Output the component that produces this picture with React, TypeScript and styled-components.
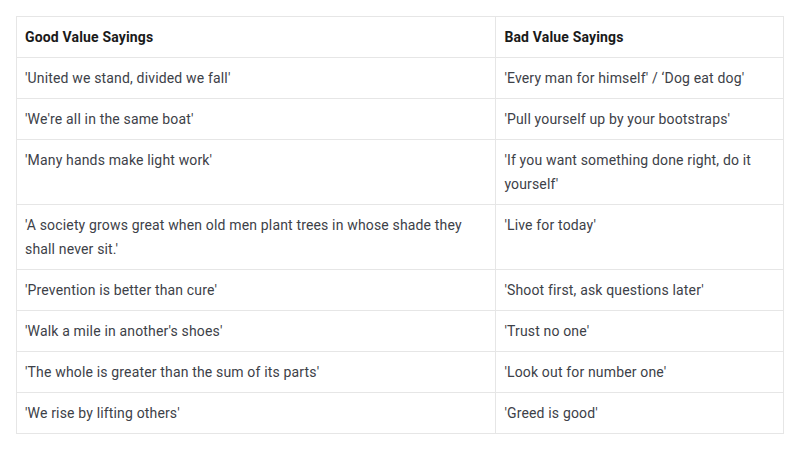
import React from "react";
import styled, { createGlobalStyle } from "styled-components";

const Global = createGlobalStyle`
  html, body { margin: 0; padding: 0; background: #ffffff; }
  body { font-family: "Roboto", "Liberation Sans", sans-serif; }
`;

const Page = styled.div`
  padding: 16px;
`;

const Table = styled.table`
  width: 768px;
  border-collapse: collapse;
  table-layout: fixed;
  font-size: 14px;
  line-height: 24px;
  letter-spacing: 0.16px;
  color: #3d4148;
`;

const HeadCell = styled.th<{ $w: string }>`
  width: ${(p) => p.$w};
  box-sizing: border-box;
  text-align: left;
  font-weight: 700;
  color: #1a1a1a;
  padding: 8px;
  border: 1px solid #e6e6e6;
  vertical-align: top;
`;

const Cell = styled.td`
  padding: 8px;
  border: 1px solid #e6e6e6;
  vertical-align: top;
`;

const rows: [string, string][] = [
  ["'United we stand, divided we fall'", "'Every man for himself' / \u2018Dog eat dog'"],
  ["'We're all in the same boat'", "'Pull yourself up by your bootstraps'"],
  ["'Many hands make light work'", "'If you want something done right, do it yourself'"],
  ["'A society grows great when old men plant trees in whose shade they shall never sit.'", "'Live for today'"],
  ["'Prevention is better than cure'", "'Shoot first, ask questions later'"],
  ["'Walk a mile in another's shoes'", "'Trust no one'"],
  ["'The whole is greater than the sum of its parts'", "'Look out for number one'"],
  ["'We rise by lifting others'", "'Greed is good'"],
];

export default function App() {
  return (
    <>
      <Global />
      <Page>
        <Table>
          <thead>
            <tr>
              <HeadCell $w="62.5%">Good Value Sayings</HeadCell>
              <HeadCell $w="37.5%">Bad Value Sayings</HeadCell>
            </tr>
          </thead>
          <tbody>
            {rows.map(([a, b], i) => (
              <tr key={i}>
                <Cell>{a}</Cell>
                <Cell>{b}</Cell>
              </tr>
            ))}
          </tbody>
        </Table>
      </Page>
    </>
  );
}
